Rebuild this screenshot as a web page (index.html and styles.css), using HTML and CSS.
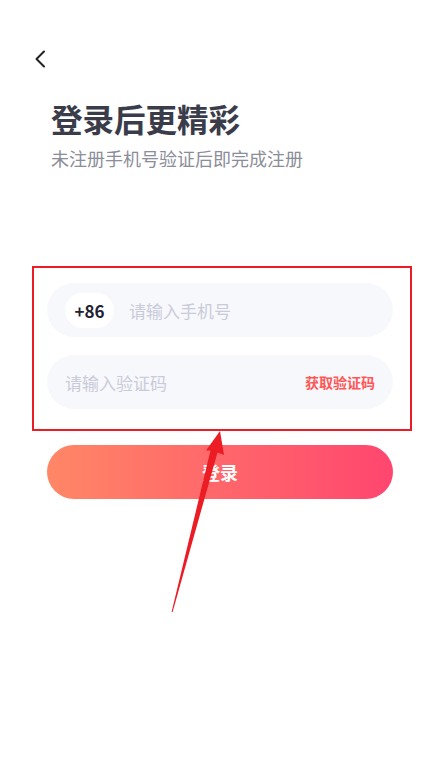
FILE: index.html
```html
<!DOCTYPE html>
<html lang="zh-CN">

<head>
    <meta charset="UTF-8">
    <meta name="viewport" content="width=device-width, initial-scale=1.0">
    <title>登录</title>
    <link rel="stylesheet" href="styles.css">
</head>

<body>
    <div class="page">
        <div class="topbar">
            <svg class="back" width="12" height="18" viewBox="0 0 12 18">
                <path d="M10 1.5 L2.5 9 L10 16.5" fill="none" stroke="#222" stroke-width="2" stroke-linecap="round" stroke-linejoin="round" />
            </svg>
        </div>

        <h1 class="title">登录后更精彩</h1>
        <p class="subtitle">未注册手机号验证后即完成注册</p>

        <div class="mark-box">
            <div class="field">
                <span class="area">+86</span>
                <input type="text" placeholder="请输入手机号">
            </div>
            <div class="field">
                <input type="text" placeholder="请输入验证码">
                <span class="get-code">获取验证码</span>
            </div>
        </div>

        <button class="login-btn">登录</button>
    </div>

    <svg class="arrow" width="441" height="784" viewBox="0 0 441 784">
        <polygon points="220,431 224,455 217.5,452.5 172.6,612 171.6,612 210.5,450.5 206,450.5" fill="#ec1c24" />
    </svg>
</body>

</html>
```

FILE: styles.css
```css
body {
    margin: 0;
    background: #fff;
    font-family: "Noto Sans CJK SC", "Noto Sans", sans-serif;
}

.page {
    position: relative;
    width: 441px;
    min-height: 784px;
}

.topbar {
    height: 51px;
}

.back {
    display: block;
    position: relative;
    top: 50px;
    left: 34px;
}

.title {
    margin: 47px 0 0 51px;
    font-size: 31.5px;
    line-height: 40px;
    font-weight: 700;
    color: #3a3c4a;
}

.subtitle {
    margin: 8px 0 0 51px;
    font-size: 18px;
    line-height: 24px;
    color: #8b8d99;
}

.mark-box {
    margin: 96px 0 0 32px;
    width: 380px;
    box-sizing: border-box;
    padding: 15px 17px 20px 13px;
    border: 2px solid #ec1c24;
    display: flex;
    flex-direction: column;
    gap: 18px;
}

.field {
    height: 54px;
    border-radius: 27px;
    background: #f7f8fc;
    display: flex;
    align-items: center;
    padding: 0 18px;
}

.field input {
    flex: 1;
    min-width: 0;
    border: none;
    outline: none;
    background: transparent;
    font-family: inherit;
    font-size: 17px;
    color: #333;
    padding: 0;
}

.field input::placeholder {
    color: #c9cbd9;
}

.area {
    width: 49px;
    height: 35px;
    border-radius: 18px;
    background: #fff;
    display: flex;
    align-items: center;
    justify-content: center;
    font-size: 17px;
    font-weight: 700;
    color: #1f2233;
    margin-right: 15px;
}

.get-code {
    font-size: 14px;
    font-weight: 700;
    color: #ff5656;
}

.login-btn {
    display: block;
    margin: 14px 0 0 47px;
    width: 346px;
    height: 54px;
    border: none;
    border-radius: 27px;
    background: linear-gradient(to right, #ff8766, #ff466f);
    color: #fff;
    font-family: inherit;
    font-size: 18px;
    font-weight: 700;
}

.arrow {
    position: absolute;
    top: 0;
    left: 0;
    pointer-events: none;
}
```
